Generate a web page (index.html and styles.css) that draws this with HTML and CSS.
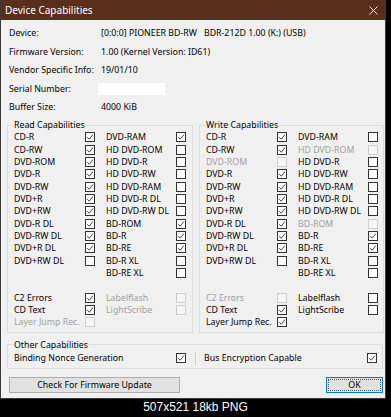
FILE: index.html
```html
<!DOCTYPE html>
<html>
<head>
<meta charset="utf-8">
<link rel="stylesheet" href="styles.css">
</head>
<body>
<div class="frame">
  <div class="window">
    <div class="titlebar">
      <span class="title">Device Capabilities</span>
      <svg class="close" viewBox="0 0 10 10" width="9" height="9"><path d="M0.5 0.5L9.5 9.5M9.5 0.5L0.5 9.5"/></svg>
    </div>
    <div class="body">
      <div class="info">
        <span>Device:</span><span>[0:0:0] PIONEER BD-RW<span class="gap">BDR-212D 1.00 (K:) (USB)</span></span>
        <span>Firmware Version:</span><span>1.00 (Kernel Version: ID61)</span>
        <span>Vendor Specific Info:</span><span>19/01/10</span>
        <span>Serial Number:</span><span><span class="serial"></span></span>
        <span>Buffer Size:</span><span>4000 KiB</span>
      </div>

      <div class="groups">
        <fieldset class="group">
          <legend>Read Capabilities</legend>
          <div class="grid">
            <span>CD-R</span><span class="cb"><svg viewBox="0 0 8 8"><path d="M1.2 4.1L3.2 6.2L7 1.5"/></svg></span><span>DVD-RAM</span><span class="cb"><svg viewBox="0 0 8 8"><path d="M1.2 4.1L3.2 6.2L7 1.5"/></svg></span>
            <span>CD-RW</span><span class="cb"><svg viewBox="0 0 8 8"><path d="M1.2 4.1L3.2 6.2L7 1.5"/></svg></span><span>HD DVD-ROM</span><span class="cb"></span>
            <span>DVD-ROM</span><span class="cb"><svg viewBox="0 0 8 8"><path d="M1.2 4.1L3.2 6.2L7 1.5"/></svg></span><span>HD DVD-R</span><span class="cb"></span>
            <span>DVD-R</span><span class="cb"><svg viewBox="0 0 8 8"><path d="M1.2 4.1L3.2 6.2L7 1.5"/></svg></span><span>HD DVD-RW</span><span class="cb"></span>
            <span>DVD-RW</span><span class="cb"><svg viewBox="0 0 8 8"><path d="M1.2 4.1L3.2 6.2L7 1.5"/></svg></span><span>HD DVD-RAM</span><span class="cb"></span>
            <span>DVD+R</span><span class="cb"><svg viewBox="0 0 8 8"><path d="M1.2 4.1L3.2 6.2L7 1.5"/></svg></span><span>HD DVD-R DL</span><span class="cb"></span>
            <span>DVD+RW</span><span class="cb"><svg viewBox="0 0 8 8"><path d="M1.2 4.1L3.2 6.2L7 1.5"/></svg></span><span>HD DVD-RW DL</span><span class="cb"></span>
            <span>DVD-R DL</span><span class="cb"><svg viewBox="0 0 8 8"><path d="M1.2 4.1L3.2 6.2L7 1.5"/></svg></span><span>BD-ROM</span><span class="cb"><svg viewBox="0 0 8 8"><path d="M1.2 4.1L3.2 6.2L7 1.5"/></svg></span>
            <span>DVD-RW DL</span><span class="cb"><svg viewBox="0 0 8 8"><path d="M1.2 4.1L3.2 6.2L7 1.5"/></svg></span><span>BD-R</span><span class="cb"><svg viewBox="0 0 8 8"><path d="M1.2 4.1L3.2 6.2L7 1.5"/></svg></span>
            <span>DVD+R DL</span><span class="cb"><svg viewBox="0 0 8 8"><path d="M1.2 4.1L3.2 6.2L7 1.5"/></svg></span><span>BD-RE</span><span class="cb"><svg viewBox="0 0 8 8"><path d="M1.2 4.1L3.2 6.2L7 1.5"/></svg></span>
            <span>DVD+RW DL</span><span class="cb"></span><span>BD-R XL</span><span class="cb"></span>
            <span></span><span></span><span>BD-RE XL</span><span class="cb"></span>
            <span class="blank"></span>
            <span>C2 Errors</span><span class="cb"><svg viewBox="0 0 8 8"><path d="M1.2 4.1L3.2 6.2L7 1.5"/></svg></span><span class="dis">Labelflash</span><span class="cb dis"></span>
            <span>CD Text</span><span class="cb"><svg viewBox="0 0 8 8"><path d="M1.2 4.1L3.2 6.2L7 1.5"/></svg></span><span class="dis">LightScribe</span><span class="cb dis"></span>
            <span class="dis">Layer Jump Rec.</span><span class="cb dis"></span><span></span><span></span>
          </div>
        </fieldset>

        <fieldset class="group">
          <legend>Write Capabilities</legend>
          <div class="grid">
            <span>CD-R</span><span class="cb"><svg viewBox="0 0 8 8"><path d="M1.2 4.1L3.2 6.2L7 1.5"/></svg></span><span>DVD-RAM</span><span class="cb"></span>
            <span>CD-RW</span><span class="cb"><svg viewBox="0 0 8 8"><path d="M1.2 4.1L3.2 6.2L7 1.5"/></svg></span><span class="dis">HD DVD-ROM</span><span class="cb dis"></span>
            <span class="dis">DVD-ROM</span><span class="cb dis"></span><span>HD DVD-R</span><span class="cb"></span>
            <span>DVD-R</span><span class="cb"><svg viewBox="0 0 8 8"><path d="M1.2 4.1L3.2 6.2L7 1.5"/></svg></span><span>HD DVD-RW</span><span class="cb"></span>
            <span>DVD-RW</span><span class="cb"><svg viewBox="0 0 8 8"><path d="M1.2 4.1L3.2 6.2L7 1.5"/></svg></span><span>HD DVD-RAM</span><span class="cb"></span>
            <span>DVD+R</span><span class="cb"><svg viewBox="0 0 8 8"><path d="M1.2 4.1L3.2 6.2L7 1.5"/></svg></span><span>HD DVD-R DL</span><span class="cb"></span>
            <span>DVD+RW</span><span class="cb"><svg viewBox="0 0 8 8"><path d="M1.2 4.1L3.2 6.2L7 1.5"/></svg></span><span>HD DVD-RW DL</span><span class="cb"></span>
            <span>DVD-R DL</span><span class="cb"><svg viewBox="0 0 8 8"><path d="M1.2 4.1L3.2 6.2L7 1.5"/></svg></span><span class="dis">BD-ROM</span><span class="cb dis"></span>
            <span>DVD-RW DL</span><span class="cb"><svg viewBox="0 0 8 8"><path d="M1.2 4.1L3.2 6.2L7 1.5"/></svg></span><span>BD-R</span><span class="cb"><svg viewBox="0 0 8 8"><path d="M1.2 4.1L3.2 6.2L7 1.5"/></svg></span>
            <span>DVD+R DL</span><span class="cb"><svg viewBox="0 0 8 8"><path d="M1.2 4.1L3.2 6.2L7 1.5"/></svg></span><span>BD-RE</span><span class="cb"><svg viewBox="0 0 8 8"><path d="M1.2 4.1L3.2 6.2L7 1.5"/></svg></span>
            <span>DVD+RW DL</span><span class="cb"></span><span>BD-R XL</span><span class="cb"></span>
            <span></span><span></span><span>BD-RE XL</span><span class="cb"></span>
            <span class="blank"></span>
            <span class="dis">C2 Errors</span><span class="cb dis"></span><span>Labelflash</span><span class="cb"></span>
            <span>CD Text</span><span class="cb"><svg viewBox="0 0 8 8"><path d="M1.2 4.1L3.2 6.2L7 1.5"/></svg></span><span>LightScribe</span><span class="cb"></span>
            <span>Layer Jump Rec.</span><span class="cb"><svg viewBox="0 0 8 8"><path d="M1.2 4.1L3.2 6.2L7 1.5"/></svg></span><span></span><span></span>
          </div>
        </fieldset>
      </div>

      <fieldset class="group other">
        <legend>Other Capabilities</legend>
        <div class="other-row">
          <span>Binding Nonce Generation</span>
          <span class="cb"><svg viewBox="0 0 8 8"><path d="M1.2 4.1L3.2 6.2L7 1.5"/></svg></span>
          <span></span>
          <span class="sep"></span>
          <span></span>
          <span>Bus Encryption Capable</span>
          <span class="cb"><svg viewBox="0 0 8 8"><path d="M1.2 4.1L3.2 6.2L7 1.5"/></svg></span>
        </div>
      </fieldset>

      <div class="buttons">
        <div class="btn fw">Check For Firmware Update</div>
        <div class="btn ok"><span class="focus">OK</span></div>
      </div>
    </div>
  </div>
  <div class="caption">507x521 18kb PNG</div>
</div>
</body>
</html>
```
FILE: styles.css
```css
html, body {
  margin: 0;
  padding: 0;
  background: #000;
}

.frame {
  width: 391px;
  height: 417px;
  overflow: hidden;
  background: #000;
}

.window {
  width: 386px;
  box-sizing: border-box;
  border: 1px solid #3a3a3a;
  border-top: none;
  background: #f0f0f0;
  font-family: "Noto Sans", "Open Sans", sans-serif;
  font-size: 8.8px;
  color: #000;
}

.titlebar {
  height: 20px;
  background: #5a2e1d;
  color: #fff;
  display: flex;
  align-items: center;
  justify-content: space-between;
  padding: 0 7px 0 4px;
  font-size: 10px;
}

.close {
  stroke: #fff;
  stroke-width: 1;
  fill: none;
}

.body {
  padding: 4px 2px 5px 6px;
}

.info {
  display: grid;
  grid-template-columns: 92px 1fr;
  grid-auto-rows: 18.5px;
  align-items: center;
  padding-left: 2px;
  white-space: nowrap;
}

.gap {
  margin-left: 7px;
}

.serial {
  display: block;
  width: 67px;
  height: 12px;
  margin-left: -3px;
  background: #fff;
}

.groups {
  display: grid;
  grid-template-columns: 186px 185px;
  column-gap: 6px;
  margin-top: 2.5px;
}

.group {
  margin: 0;
  padding: 0 0 3px 6px;
  min-width: 0;
  border: 1px solid #dcdcdc;
}

.group legend {
  padding: 0 1px;
  margin-left: -1px;
  line-height: 12.33px;
}

.grid {
  display: grid;
  grid-template-columns: 71px 21px 70px 10px;
  grid-auto-rows: 12.33px;
  align-items: center;
  white-space: nowrap;
}

.blank {
  grid-column: 1 / -1;
}

.dis {
  color: #a0a0a0;
}

.cb {
  width: 10px;
  height: 10px;
  box-sizing: border-box;
  border: 1px solid #333;
  background: #fff;
  display: block;
}

.cb.dis {
  border-color: #cfcfcf;
  background: #f6f6f6;
}

.cb svg {
  display: block;
  width: 8px;
  height: 8px;
  fill: none;
  stroke: #333;
  stroke-width: 0.9;
}

.other {
  margin-top: 6px;
  padding-bottom: 2.5px;
}

.other-row {
  display: grid;
  grid-template-columns: 162px 10px 9px 1px 8px 163px 10px;
  height: 15px;
  align-items: center;
  white-space: nowrap;
}

.sep {
  height: 13px;
  background: #cdcdcd;
}

.buttons {
  display: flex;
  justify-content: space-between;
  margin-top: 8px;
  padding-left: 2px;
}

.btn {
  height: 16px;
  box-sizing: border-box;
  background: #e1e1e1;
  border: 1px solid #adadad;
  display: flex;
  align-items: center;
  justify-content: center;
}

.fw {
  width: 171px;
}

.ok {
  width: 57px;
  border-color: #0078d7;
  padding: 1px;
}

.focus {
  flex: 1;
  align-self: stretch;
  display: flex;
  align-items: center;
  justify-content: center;
  border: 1px dotted #555;
}

.caption {
  height: 17px;
  line-height: 17px;
  text-align: center;
  color: #fff;
  font-family: "Liberation Sans", Arial, sans-serif;
  font-size: 12px;
}
```
